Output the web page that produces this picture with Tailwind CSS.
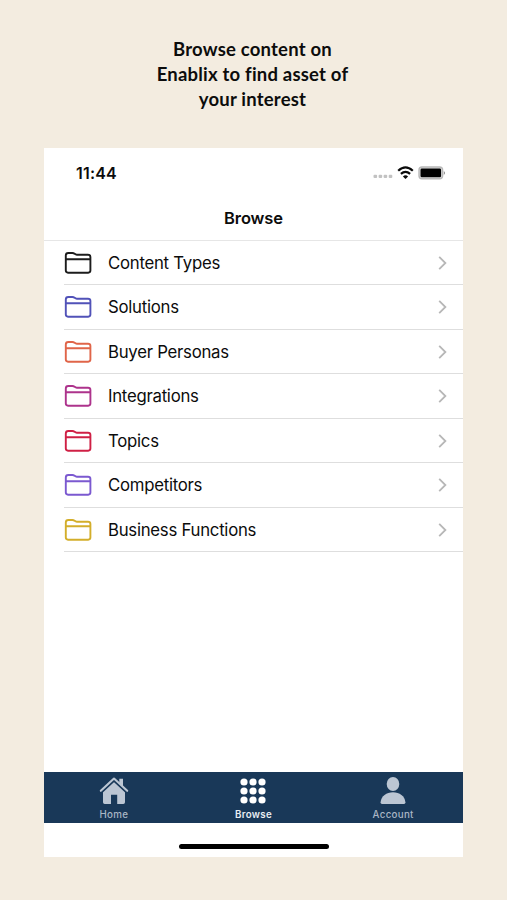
<!DOCTYPE html>
<html lang="en">
<head>
<meta charset="utf-8">
<title>Browse</title>
<script src="https://cdn.jsdelivr.net/npm/@tailwindcss/browser@4"></script>
</head>
<body class="bg-[#f3ece0] font-['Inter',sans-serif] text-[#0c0c0c]">
<svg class="hidden">
  <symbol id="folder" viewBox="0 0 28 24"><path fill="none" stroke="currentColor" stroke-width="1.9" stroke-linejoin="round" d="M1.8 7.2V4.5Q1.8 2 4.3 2H8.4Q9.6 2 10.6 2.8Q11.7 3.7 12.8 3.7H24Q26.4 3.7 26.4 6V19.6Q26.4 21.7 24.2 21.7H4Q1.8 21.7 1.8 19.6ZM1.8 8.3H26.4"/></symbol>
  <symbol id="chev" viewBox="0 0 10 16"><path fill="none" stroke="currentColor" stroke-width="1.8" d="M1.2 1.8L7.4 8L1.2 14.2"/></symbol>
</svg>
<div class="flex h-[900px] w-[507px] flex-col overflow-hidden">
  <h1 class="flex h-[148px] flex-col items-center pt-[37px] pr-[2px] text-center font-['Lato',sans-serif] text-[18.5px] leading-[25px] font-bold tracking-[0.2px] whitespace-nowrap">
    <span>Browse content on</span><span>Enablix to find asset of</span><span>your interest</span>
  </h1>
  <main class="ml-[44px] flex h-[709px] w-[419px] flex-col bg-white">
    <div class="flex h-[48px] items-center justify-between pr-[17px] pl-[32px]">
      <span class="pt-[2px] text-[16px] font-semibold tracking-[0.2px]">11:44</span>
      <div class="flex items-center">
        <svg class="mt-[9px] mr-[4px]" width="20" height="5" fill="#c2c2c2"><rect x="0.5" y="0.7" width="3.6" height="3.4" rx="1"/><rect x="5.6" y="0.7" width="3.6" height="3.4" rx="1"/><rect x="10.6" y="0.7" width="3.6" height="3.4" rx="1"/><rect x="15.7" y="0.7" width="3.6" height="3.4" rx="1"/></svg>
        <svg class="mr-[4px]" width="17" height="13" viewBox="0 0 17 13" fill="none" stroke="#0a0a0a" stroke-width="2.2"><path d="M1.2 4.8Q8.5 -2 15.8 4.8M3.9 7.9Q8.5 3.8 13.1 7.9"/><path d="M5.9 10.4Q8.5 8.3 11.1 10.4L8.5 13Z" fill="#0a0a0a" stroke="none"/></svg>
        <svg class="mt-px" width="28" height="14" viewBox="0 0 28 14"><rect x="1" y="1" width="23.6" height="11.8" rx="3" fill="#e0e0e0" stroke="#b8b8b8" stroke-width="1.4"/><rect x="2.5" y="2.5" width="20.6" height="8.8" rx="1.4" fill="#000"/><path d="M25.8 5Q28.2 6.9 25.8 8.9Z" fill="#888"/></svg>
      </div>
    </div>
    <div class="flex h-[44.5px] items-center justify-center border-b-[1px] border-[#e6e6e6] pt-px text-[16.5px] font-semibold tracking-[-0.1px]">Browse</div>
    <ul class="flex flex-1 flex-col text-[16.75px] tracking-[-0.26px]">
      <li class="ml-[20px] flex h-[44.5px] items-center border-b border-[#dedede] pt-px pr-[15px]"><svg class="mr-[16px] h-[24px] w-[28px] text-[#1c1c1c]"><use href="#folder"/></svg><span class="flex-1 pt-px">Content Types</span><svg class="h-[16px] w-[10px] text-[#b7b7b7]"><use href="#chev"/></svg></li>
      <li class="ml-[20px] flex h-[44.5px] items-center border-b border-[#dedede] pt-px pr-[15px]"><svg class="mr-[16px] h-[24px] w-[28px] text-[#5152b8]"><use href="#folder"/></svg><span class="flex-1 pt-px">Solutions</span><svg class="h-[16px] w-[10px] text-[#b7b7b7]"><use href="#chev"/></svg></li>
      <li class="ml-[20px] flex h-[44.5px] items-center border-b border-[#dedede] pt-px pr-[15px]"><svg class="mr-[16px] h-[24px] w-[28px] text-[#e06549]"><use href="#folder"/></svg><span class="flex-1 pt-px">Buyer Personas</span><svg class="h-[16px] w-[10px] text-[#b7b7b7]"><use href="#chev"/></svg></li>
      <li class="ml-[20px] flex h-[44.5px] items-center border-b border-[#dedede] pt-px pr-[15px]"><svg class="mr-[16px] h-[24px] w-[28px] text-[#ad338c]"><use href="#folder"/></svg><span class="flex-1 pt-px">Integrations</span><svg class="h-[16px] w-[10px] text-[#b7b7b7]"><use href="#chev"/></svg></li>
      <li class="ml-[20px] flex h-[44.5px] items-center border-b border-[#dedede] pt-px pr-[15px]"><svg class="mr-[16px] h-[24px] w-[28px] text-[#cf2045]"><use href="#folder"/></svg><span class="flex-1 pt-px">Topics</span><svg class="h-[16px] w-[10px] text-[#b7b7b7]"><use href="#chev"/></svg></li>
      <li class="ml-[20px] flex h-[44.5px] items-center border-b border-[#dedede] pt-px pr-[15px]"><svg class="mr-[16px] h-[24px] w-[28px] text-[#7b59d0]"><use href="#folder"/></svg><span class="flex-1 pt-px">Competitors</span><svg class="h-[16px] w-[10px] text-[#b7b7b7]"><use href="#chev"/></svg></li>
      <li class="ml-[20px] flex h-[44.5px] items-center border-b border-[#dedede] pt-px pr-[15px]"><svg class="mr-[16px] h-[24px] w-[28px] text-[#d3ae2b]"><use href="#folder"/></svg><span class="flex-1 pt-px">Business Functions</span><svg class="h-[16px] w-[10px] text-[#b7b7b7]"><use href="#chev"/></svg></li>
    </ul>
    <nav class="grid h-[51px] grid-cols-3 bg-[#193858] text-[9.75px] leading-[12px] font-medium tracking-[0.3px] text-[#a9b6c5]">
      <div class="flex flex-col items-center pt-[5px]"><svg class="mb-[4px]" width="30" height="28" viewBox="0 0 30 28" fill="#bcc6d3"><path d="M15 4.5L26 14V25.3Q26 27 24.3 27H18.2V17.7H12V27H5.7Q4 27 4 25.3V14Z"/><path d="M1.8 15L15 2.8L28.2 15" fill="none" stroke="#193858" stroke-width="3.6"/><path d="M20.3 1.8H24V10L20.3 6.5Z"/><path d="M1.8 13.8L15 1.5L28.2 13.8" fill="none" stroke="#bcc6d3" stroke-width="2.1" stroke-linecap="round" stroke-linejoin="round"/></svg>Home</div>
      <div class="flex flex-col items-center pt-[5px] font-semibold text-[#e9eef4]"><svg class="mb-[4px]" width="28" height="28" viewBox="0 0 28 28" fill="#fff"><circle cx="5" cy="5" r="3.6"/><circle cx="14" cy="5" r="3.6"/><circle cx="23" cy="5" r="3.6"/><circle cx="5" cy="14" r="3.6"/><circle cx="14" cy="14" r="3.6"/><circle cx="23" cy="14" r="3.6"/><circle cx="5" cy="23" r="3.6"/><circle cx="14" cy="23" r="3.6"/><circle cx="23" cy="23" r="3.6"/></svg>Browse</div>
      <div class="flex flex-col items-center pt-[5px]"><svg class="mb-[4px]" width="28" height="28" viewBox="0 0 28 28" fill="#bcc6d3"><ellipse cx="14" cy="7" rx="6.3" ry="6.9"/><path d="M1.6 25.3C2.2 19 7.5 15.3 14 15.3S25.8 19 26.4 25.3Q26.5 27 25 27H3Q1.5 27 1.6 25.3Z"/></svg>Account</div>
    </nav>
    <div class="flex h-[34px] justify-center pt-[21px]"><div class="h-[5px] w-[150px] rounded-full bg-black"></div></div>
  </main>
</div>
</body>
</html>
